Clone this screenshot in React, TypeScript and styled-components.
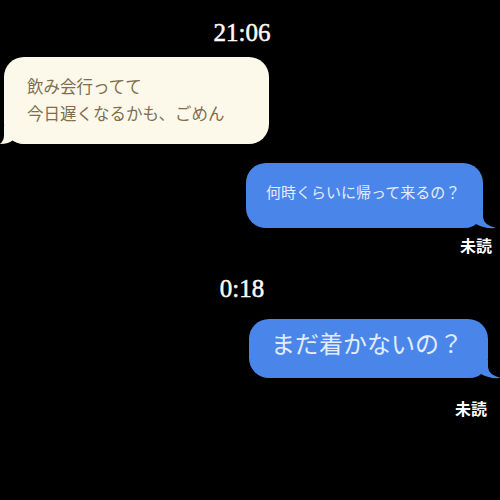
import React from "react";
import styled, { createGlobalStyle } from "styled-components";

const Global = createGlobalStyle`
  html, body { margin: 0; padding: 0; background: #000; }
  body { width: 500px; height: 500px; overflow: hidden; }
`;

const Screen = styled.div`
  width: 500px;
  height: 500px;
  background: #000;
  display: flex;
  flex-direction: column;
  padding-top: 21px;
  box-sizing: border-box;
  font-family: "Noto Sans CJK JP", "Noto Sans", sans-serif;
`;

const Time = styled.div<{ $mt?: number }>`
  margin-top: ${(p) => p.$mt ?? 0}px;
  text-align: center;
  color: #fbfbf6;
  font-family: "Liberation Serif", "DejaVu Serif", serif;
  font-size: 25px;
  font-weight: 400;
  -webkit-text-stroke: 0.5px #fbfbf6;
  line-height: 24px;
  padding-right: 16px;
`;

const Row = styled.div<{ $side: "left" | "right"; $mt: number; $edge: number }>`
  display: flex;
  justify-content: ${(p) => (p.$side === "left" ? "flex-start" : "flex-end")};
  margin-top: ${(p) => p.$mt}px;
  ${(p) => (p.$side === "left" ? `padding-left: ${p.$edge}px;` : `padding-right: ${p.$edge}px;`)}
`;

const Bubble = styled.div<{ $variant: "in" | "out" }>`
  position: relative;
  border-radius: 20px;
  background: ${(p) => (p.$variant === "in" ? "#fdf9ea" : "#4a86ea")};
  color: ${(p) => (p.$variant === "in" ? "#7f6e4d" : "#e4ecfb")};
  box-sizing: border-box;
`;

const InText = styled.div`
  font-size: 16.5px;
  line-height: 27px;
  padding: 16px 20px 17px 23px;
  white-space: nowrap;
  width: 265px;
  box-sizing: border-box;
`;

const OutText = styled.div<{ $size: number; $pad: string; $w: number; $lh: number }>`
  font-size: ${(p) => p.$size}px;
  line-height: ${(p) => p.$lh}px;
  padding: ${(p) => p.$pad};
  width: ${(p) => p.$w}px;
  box-sizing: border-box;
  white-space: nowrap;
`;

const Tail = styled.svg<{ $side: "left" | "right" }>`
  position: absolute;
  bottom: 0;
  ${(p) => (p.$side === "left" ? "left: -4px;" : "right: -13px;")}
  width: 26px;
  height: 18px;
  display: block;
  overflow: visible;
`;

const Status = styled.div<{ $mt: number; $edge: number }>`
  margin-top: ${(p) => p.$mt}px;
  align-self: flex-end;
  padding-right: ${(p) => p.$edge}px;
  color: #fff;
  font-family: "Noto Sans CJK JP", sans-serif;
  font-size: 16px;
  font-weight: 700;
  line-height: 20px;
`;

const LeftTail = ({ fill }: { fill: string }) => (
  <Tail $side="left" viewBox="0 0 26 18">
    <path d="M4 0 L4 9 Q4 15 0 18 Q9 18 13 14 Q17 17 26 18 L26 0 Z" fill={fill} />
  </Tail>
);

const RightTail = ({ fill }: { fill: string }) => (
  <Tail $side="right" viewBox="0 0 26 18">
    <path d="M0 0 L13 0 L13 7 Q13.5 15 26 18 Q14 19 6 14 Q3 17 -4 18 L-4 0 Z" fill={fill} />
  </Tail>
);

export default function App() {
  return (
    <>
      <Global />
      <Screen>
        <Time>21:06</Time>
        <Row $side="left" $mt={12} $edge={4}>
          <Bubble $variant="in">
            <LeftTail fill="#fdf9ea" />
            <InText>
              飲み会行ってて
              <br />
              今日遅くなるかも、ごめん
            </InText>
          </Bubble>
        </Row>
        <Row $side="right" $mt={19} $edge={17}>
          <Bubble $variant="out">
            <RightTail fill="#4a86ea" />
            <OutText $size={15} $lh={20} $pad="19px 20px 26px 20px" $w={237}>
              何時くらいに帰って来るの？
            </OutText>
          </Bubble>
        </Row>
        <Status $mt={7} $edge={8}>未読</Status>
        <Time $mt={22}>0:18</Time>
        <Row $side="right" $mt={18} $edge={12}>
          <Bubble $variant="out">
            <RightTail fill="#4a86ea" />
            <OutText $size={24} $lh={30} $pad="9px 20px 20px 22px" $w={239}>
              まだ着かないの？
            </OutText>
          </Bubble>
        </Row>
        <Status $mt={20} $edge={13}>未読</Status>
      </Screen>
    </>
  );
}
